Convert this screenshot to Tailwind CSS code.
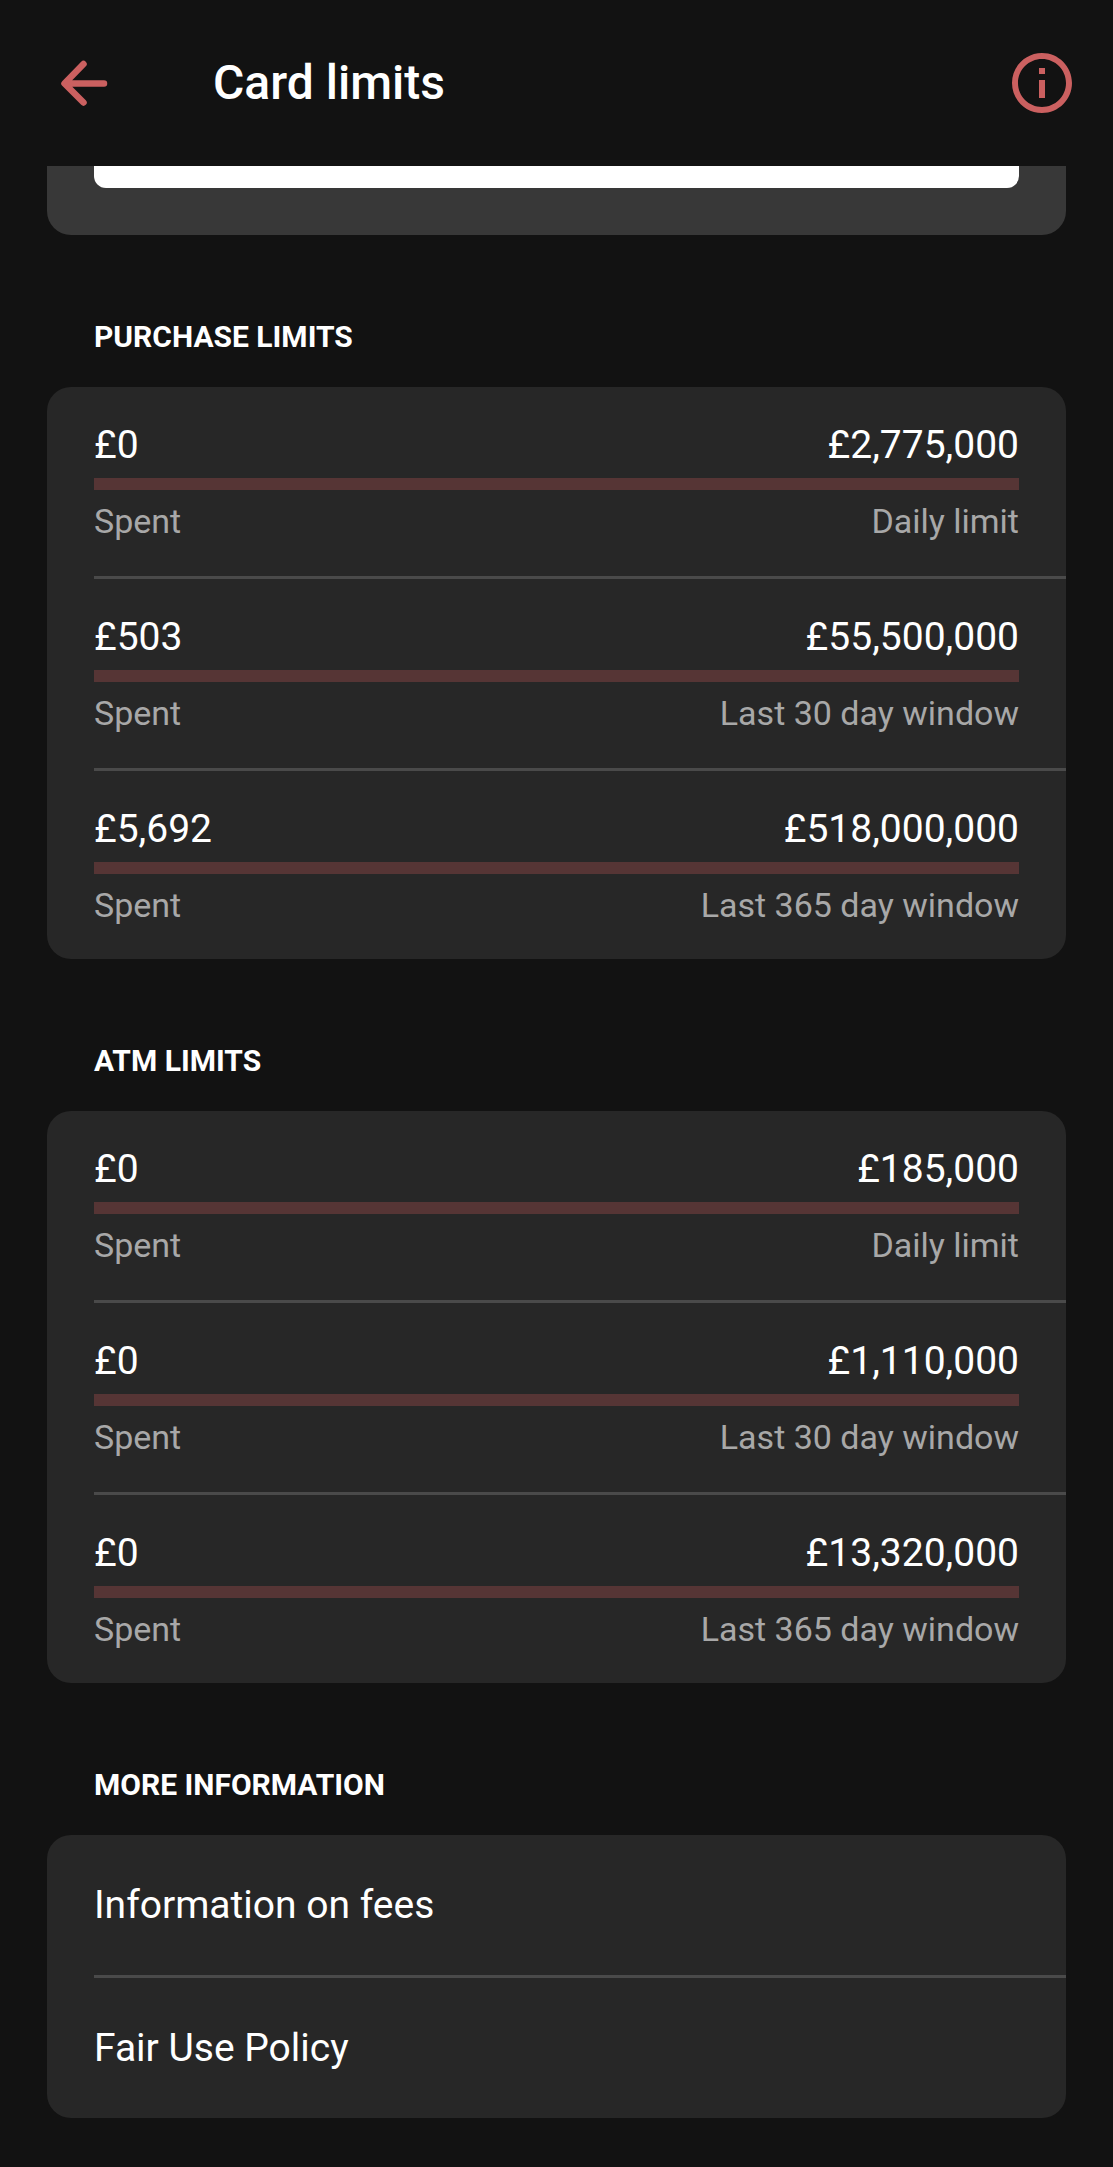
<!DOCTYPE html>
<html lang="en">
<head>
    <meta charset="UTF-8">
    <meta name="viewport" content="width=device-width, initial-scale=1.0">
    <title>Card limits</title>
    <script src="https://cdn.jsdelivr.net/npm/@tailwindcss/browser@4"></script>
</head>
<body class="bg-[#121212] text-white font-[Roboto,sans-serif]">
    <header class="flex items-center h-[166px] pl-12 pr-[35px]">
        <button type="button" aria-label="Back" class="size-[72px] text-[#cb6060]">
            <svg viewBox="0 0 72 72" class="size-full" fill="none" stroke="currentColor" stroke-width="6.5" stroke-linecap="round" stroke-linejoin="round">
                <path d="M56 36.500H17M35.500 17L16.500 36.500L35.500 55.500"/>
            </svg>
        </button>
        <h1 class="flex-1 ml-[93px] text-5xl leading-[56px] font-medium">Card limits</h1>
        <button type="button" aria-label="Information" class="size-[72px] text-[#cb6060]">
            <svg viewBox="0 0 24 24" class="size-full" fill="currentColor">
                <path d="M11 7h2v2h-2zm0 4h2v6h-2zm1-9C6.480 2 2 6.480 2 12s4.480 10 10 10 10-4.480 10-10S17.520 2 12 2zm0 18c-4.410 0-8-3.590-8-8s3.590-8 8-8 8 3.590 8 8-3.590 8-8 8z"/>
            </svg>
        </button>
    </header>
    <main class="px-[47px] pb-[47px]">
        <div class="bg-[#383838] rounded-b-3xl px-[47px] pb-[47px]">
            <div class="bg-white rounded-b-xl h-[22px]"></div>
        </div>

        <section>
            <h2 class="px-[47px] pt-[84px] pb-8 text-3xl leading-9 font-bold">PURCHASE LIMITS</h2>
            <ul class="bg-[#272727] rounded-3xl pl-[47px]">
                <li class="pt-9 pr-[47px] pb-[35px] border-b-3 border-[#4a4a4a]">
                    <div class="flex justify-between text-[39px] leading-[44px]"><span>£0</span><span>£2,775,000</span></div>
                    <div role="progressbar" aria-label="Daily purchases" aria-valuenow="0" aria-valuemax="2775000" class="h-3 my-[11px] bg-[#563535]"></div>
                    <div class="flex justify-between text-[34px] leading-10 text-[#a8a8a8]"><span>Spent</span><span>Daily limit</span></div>
                </li>
                <li class="pt-9 pr-[47px] pb-[35px] border-b-3 border-[#4a4a4a]">
                    <div class="flex justify-between text-[39px] leading-[44px]"><span>£503</span><span>£55,500,000</span></div>
                    <div role="progressbar" aria-label="Purchases in the last 30 days" aria-valuenow="503" aria-valuemax="55500000" class="h-3 my-[11px] bg-[#563535]"></div>
                    <div class="flex justify-between text-[34px] leading-10 text-[#a8a8a8]"><span>Spent</span><span>Last 30 day window</span></div>
                </li>
                <li class="pt-9 pr-[47px] pb-[34px]">
                    <div class="flex justify-between text-[39px] leading-[44px]"><span>£5,692</span><span>£518,000,000</span></div>
                    <div role="progressbar" aria-label="Purchases in the last 365 days" aria-valuenow="5692" aria-valuemax="518000000" class="h-3 my-[11px] bg-[#563535]"></div>
                    <div class="flex justify-between text-[34px] leading-10 text-[#a8a8a8]"><span>Spent</span><span>Last 365 day window</span></div>
                </li>
            </ul>
        </section>

        <section>
            <h2 class="px-[47px] pt-[84px] pb-8 text-3xl leading-9 font-bold">ATM LIMITS</h2>
            <ul class="bg-[#272727] rounded-3xl pl-[47px]">
                <li class="pt-9 pr-[47px] pb-[35px] border-b-3 border-[#4a4a4a]">
                    <div class="flex justify-between text-[39px] leading-[44px]"><span>£0</span><span>£185,000</span></div>
                    <div role="progressbar" aria-label="Daily withdrawals" aria-valuenow="0" aria-valuemax="185000" class="h-3 my-[11px] bg-[#563535]"></div>
                    <div class="flex justify-between text-[34px] leading-10 text-[#a8a8a8]"><span>Spent</span><span>Daily limit</span></div>
                </li>
                <li class="pt-9 pr-[47px] pb-[35px] border-b-3 border-[#4a4a4a]">
                    <div class="flex justify-between text-[39px] leading-[44px]"><span>£0</span><span>£1,110,000</span></div>
                    <div role="progressbar" aria-label="Withdrawals in the last 30 days" aria-valuenow="0" aria-valuemax="1110000" class="h-3 my-[11px] bg-[#563535]"></div>
                    <div class="flex justify-between text-[34px] leading-10 text-[#a8a8a8]"><span>Spent</span><span>Last 30 day window</span></div>
                </li>
                <li class="pt-9 pr-[47px] pb-[34px]">
                    <div class="flex justify-between text-[39px] leading-[44px]"><span>£0</span><span>£13,320,000</span></div>
                    <div role="progressbar" aria-label="Withdrawals in the last 365 days" aria-valuenow="0" aria-valuemax="13320000" class="h-3 my-[11px] bg-[#563535]"></div>
                    <div class="flex justify-between text-[34px] leading-10 text-[#a8a8a8]"><span>Spent</span><span>Last 365 day window</span></div>
                </li>
            </ul>
        </section>

        <section>
            <h2 class="px-[47px] pt-[84px] pb-8 text-3xl leading-9 font-bold">MORE INFORMATION</h2>
            <nav class="bg-[#272727] rounded-3xl pl-[47px] text-[39px] leading-[44px]">
                <a href="#" class="block py-12 border-b-3 border-[#4a4a4a]">Information on fees</a>
                <a href="#" class="block py-12">Fair Use Policy</a>
            </nav>
        </section>
    </main>
</body>
</html>
